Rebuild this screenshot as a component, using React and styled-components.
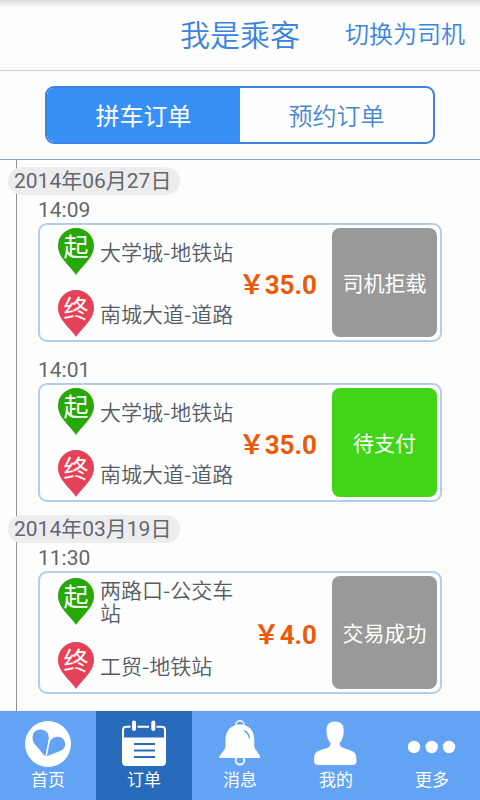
import styled, { createGlobalStyle, css } from 'styled-components';

const GlobalStyle = createGlobalStyle`
  * {
    box-sizing: border-box;
  }

  body {
    margin: 0;
    background: #fdfdfd;
    color: #555b63;
    font-family: Roboto, 'Noto Sans CJK SC', sans-serif;
    font-size: 21px;
    font-weight: 350;
  }

  button {
    font: inherit;
    cursor: pointer;
  }
`;

const days = [
  {
    date: '2014年06月27日',
    orders: [
      { time: '14:09', from: '大学城-地铁站', to: '南城大道-道路', price: '35.0', status: '司机拒载' },
      { time: '14:01', from: '大学城-地铁站', to: '南城大道-道路', price: '35.0', status: '待支付', payable: true },
    ],
  },
  {
    date: '2014年03月19日',
    orders: [
      { time: '11:30', from: '两路口-公交车站', to: '工贸-地铁站', price: '4.0', status: '交易成功' },
    ],
  },
];

const navItems = [
  { label: '首页', icon: HomeIcon },
  { label: '订单', icon: OrdersIcon, active: true },
  { label: '消息', icon: BellIcon },
  { label: '我的', icon: UserIcon },
  { label: '更多', icon: MoreIcon },
];

export default function App() {
  return (
    <Page>
      <GlobalStyle />

      {/* Header */}
      <Header>
        <Title>我是乘客</Title>
        <SwitchLink href="#driver">切换为司机</SwitchLink>
      </Header>

      {/* Order type */}
      <TabBar>
        <Tabs>
          <Tab $active>拼车订单</Tab>
          <Tab>预约订单</Tab>
        </Tabs>
      </TabBar>

      {/* Orders */}
      <Timeline>
        {days.map((day) => (
          <Day key={day.date}>
            <DayLabel>{day.date}</DayLabel>
            {day.orders.map((order) => (
              <Order key={order.time} {...order} />
            ))}
          </Day>
        ))}
      </Timeline>

      {/* Bottom navigation */}
      <Nav>
        {navItems.map(({ label, icon: Icon, active }) => (
          <NavLink key={label} href="#" $active={active}>
            <Icon />
            {label}
          </NavLink>
        ))}
      </Nav>
    </Page>
  );
}

function Order(props) {
  const { time, from, to, price, status, payable } = props;

  return (
    <OrderItem>
      <Time>{time}</Time>
      <OrderCard>
        <Route>
          <Stop>
            <Pin color="#28a808" label="起" />
            <StopName>{from}</StopName>
          </Stop>
          <Stop>
            <Pin color="#e64257" label="终" />
            <StopName>{to}</StopName>
          </Stop>
        </Route>
        <Price>￥{price}</Price>
        <Status $payable={payable}>{status}</Status>
      </OrderCard>
    </OrderItem>
  );
}

function Pin({ color, label }) {
  return (
    <PinSVG viewBox="0 0 36 47">
      <path fill={color} d="M18 0C8 0 0 8 0 17.500C0 25 4 30 8 35C12 39.500 16 43.500 18 47C20 43.500 24 39.500 28 35C32 30 36 25 36 17.500C36 8 28 0 18 0Z" />
      <text x="18" y="28" textAnchor="middle" fill="#fff">{label}</text>
    </PinSVG>
  );
}

function HomeIcon() {
  return (
    <NavSVG viewBox="0 0 48 48">
      <circle cx="24" cy="24" r="23" fill="#fff" />
      <path fill="#62a3f3" d="M21.300 36.500L11 24.500C9.500 22.500 8.600 20.500 8.600 17.500C8.600 12.500 12 9.500 16.500 9.500C21.500 9.500 25 13 24.800 18C24.700 20 24.200 21.500 23.800 23.500Z" />
      <path fill="#62a3f3" d="M22.900 36.300L25.300 24C26 19.500 29.500 16.800 33.500 16.800C38 16.800 41.200 20 41.200 24.300C41.200 28 39 30 36 31Z" />
    </NavSVG>
  );
}

function OrdersIcon() {
  return (
    <NavSVG viewBox="0 0 48 48">
      <path fill="none" stroke="#fff" strokeWidth="2" d="M3 18V10C3 8 4.500 6.700 6.500 6.700H10.500M17.500 6.700H29M36.500 6.700H41.500C43.500 6.700 45 8 45 10V18" />
      <path fill="#fff" d="M2 17.500H46V42C46 44.500 44.500 46 42 46H6C3.500 46 2 44.500 2 42Z" />
      <path stroke="#fff" strokeWidth="4" strokeLinecap="round" d="M14 2.500V9M33.300 2.500V9" />
      <path stroke="#286bba" strokeWidth="2" d="M14 24H35M14 30.500H35M14 37H35" />
    </NavSVG>
  );
}

function BellIcon() {
  return (
    <NavSVG viewBox="0 0 48 48">
      <circle cx="24" cy="4.800" r="4" fill="none" stroke="#fff" strokeWidth="1.500" />
      <circle cx="24" cy="40.300" r="4.300" fill="none" stroke="#fff" strokeWidth="1.800" />
      <path fill="#fff" d="M24 4.500C15 4.500 9.500 11 9.500 19.500V26C9.500 28 8.500 29.500 7 31.500C5 34 3.500 35.500 3.200 38H44.300C44 35.500 42.800 34 41 31.500C39.500 29.500 38.300 28 38.300 26V19.500C38.300 11 33 4.500 24 4.500Z" />
      <path fill="none" stroke="#62a3f3" strokeWidth="1.500" d="M28.300 10.800C31 12 33 14.500 33.500 18.500" />
    </NavSVG>
  );
}

function UserIcon() {
  return (
    <NavSVG viewBox="0 0 48 48">
      <path fill="#fff" d="M23 1.500C17 1.500 14.500 5 14.500 10C14.500 16 16 20.500 18.500 23C18.500 26 17.500 27 15 28C9 30 4.500 31 3 34C2 36.500 2 39 2 41C2 43.500 3.500 45 6 45H40.500C43 45 44.500 43.500 44.500 41C44.500 39 44.300 36.500 43.500 34C42 31 37 30 31.500 28C29 27 27.500 26 27.500 23C30.500 20.500 31.700 16 31.700 10C31.700 5 29 1.500 23 1.500Z" />
    </NavSVG>
  );
}

function MoreIcon() {
  return (
    <NavSVG viewBox="0 0 48 48">
      <g fill="#fff">
        <circle cx="6" cy="27" r="6.200" />
        <circle cx="23.700" cy="27" r="6.200" />
        <circle cx="41" cy="27" r="6.200" />
      </g>
    </NavSVG>
  );
}

const Page = styled.div`
  display: flex;
  flex-direction: column;
  min-height: 100vh;
`;

const Header = styled.header`
  display: grid;
  grid-template-columns: 1fr auto 1fr;
  align-items: center;
  height: 71px;
  padding: 0 15px 5px;
  border-bottom: 1px solid #c3cfe0;
  background: linear-gradient(#dcdcdc, #fdfdfd 8px);
  color: #3b83e0;
`;

const Title = styled.h1`
  grid-column: 2;
  margin: 0;
  font-size: 30px;
  font-weight: 350;
`;

const SwitchLink = styled.a`
  justify-self: end;
  color: inherit;
  font-size: 24px;
  text-decoration: none;
  white-space: nowrap;
`;

const TabBar = styled.div`
  padding: 15px 45px;
  border-bottom: 1px solid #7fa8c4;
`;

const Tabs = styled.div`
  display: flex;
  height: 58px;
  border: 2px solid #3f83e0;
  border-radius: 9px;
  overflow: hidden;
`;

const Tab = styled.button`
  flex: 1;
  padding: 0 0 2px;
  border: 0;
  background: none;
  color: #4688d2;
  font-size: 24px;

  ${({ $active }) => $active && css`
    background: #388ff5;
    color: #fff;
    font-weight: 400;
  `}
`;

const Timeline = styled.main`
  flex: 1;
  margin-left: 16px;
  padding: 7px 38px 17px 0;
  border-left: 1px solid #8f9295;
`;

const Day = styled.section`
  & + & {
    margin-top: 13px;
  }
`;

const DayLabel = styled.h2`
  width: fit-content;
  height: 28px;
  margin: 0 0 0 -9px;
  padding: 0 9px 0 6px;
  border-radius: 14px;
  background: #ededee;
  color: #62676e;
  font-size: 21px;
  font-weight: 400;
  line-height: 28px;
`;

const OrderItem = styled.article`
  margin-left: 21px;

  & + & {
    margin-top: 13px;
  }
`;

const Time = styled.div`
  height: 28px;
  color: #62676e;
  font-weight: 400;
  line-height: 30px;
`;

const OrderCard = styled.div`
  display: flex;
  align-items: center;
  padding: 3px 3px 3px 18px;
  border: 2px solid #b3cdea;
  border-radius: 9px;
`;

const Route = styled.div`
  display: flex;
  flex: 1;
  flex-direction: column;
  gap: 15px;
`;

const Stop = styled.div`
  display: flex;
  align-items: center;
  gap: 6px;
`;

const StopName = styled.div`
  flex: 1;
  padding: 2px 0 3px;
  font-family: 'Noto Sans CJK SC', sans-serif;
  line-height: 23px;
`;

const PinSVG = styled.svg`
  flex: none;
  width: 36px;
  height: 47px;
  font-size: 25px;
  font-weight: 400;
`;

const Price = styled.div`
  flex: none;
  width: 80px;
  margin-right: 15px;
  color: #ea5a0b;
  font-size: 26px;
  font-weight: 700;
  text-align: right;
  white-space: nowrap;
`;

const Status = styled.button`
  flex: none;
  align-self: stretch;
  width: 105px;
  padding: 0 0 2px;
  border: 0;
  border-radius: 8px;
  background: ${({ $payable }) => ($payable ? '#41d51a' : '#999')};
  color: #fff;
  font-weight: 400;
`;

const Nav = styled.nav`
  display: flex;
  height: 89px;
  background: #62a3f3;
`;

const NavLink = styled.a`
  display: flex;
  flex: 1;
  flex-direction: column;
  align-items: center;
  padding-top: 9px;
  background: ${({ $active }) => ($active ? '#286bba' : 'none')};
  color: #fff;
  font-size: 17px;
  font-weight: 400;
  line-height: 25px;
  text-decoration: none;
`;

const NavSVG = styled.svg`
  width: 48px;
  height: 48px;
`;
